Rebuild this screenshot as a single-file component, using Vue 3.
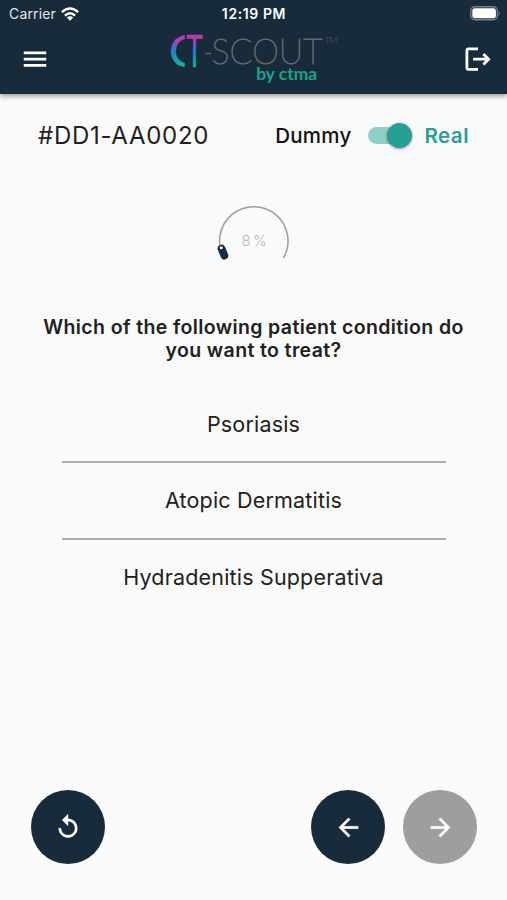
<script setup>
import { ref } from "vue";

const patientId = ref("#DD1-AA0020");
const isReal = ref(true);
const progress = ref(8);
const selected = ref(null);

const conditions = [
  { id: 1, name: "Psoriasis" },
  { id: 2, name: "Atopic Dermatitis" },
  { id: 3, name: "Hydradenitis Supperativa" },
];

const select = (id) => {
  selected.value = id;
};

const restart = () => {
  selected.value = null;
};
</script>

<template>
  <div class="screen">
    <header class="app-bar">
      <div class="status-bar">
        <div class="carrier">
          <span>Carrier</span>
          <svg class="wifi" width="18" height="14" viewBox="0 0 18 14">
            <g fill="none" stroke="#fff" stroke-width="2.5">
              <path d="M0.9 5.2Q9 -2.2 17.1 5.2" />
              <path d="M3.9 8.6Q9 4 14.1 8.6" />
            </g>
            <path d="M9 13.8L5.8 10.5Q9 8 12.2 10.5Z" fill="#fff" />
          </svg>
        </div>
        <span class="clock">12:19 PM</span>
        <svg class="battery" width="31" height="15" viewBox="0 0 31 15">
          <rect x="0.8" y="0.8" width="26.6" height="13" rx="4" fill="none" stroke="#74808a" stroke-width="1.4" />
          <rect x="2.3" y="2.3" width="23.6" height="10" rx="2.4" fill="#fff" />
          <path d="M28.8 5Q31 7.3 28.8 9.6Z" fill="#74808a" />
        </svg>
      </div>

      <div class="toolbar">
        <button class="icon-btn">
          <svg width="30" height="30" viewBox="0 0 24 24" fill="#fff">
            <path d="M3 18.2h18v-2.3H3v2.3zm0-5h18v-2.3H3v2.3zm0-7.3v2.3h18V5.9H3z" />
          </svg>
        </button>

        <svg class="logo" width="170" height="56" viewBox="0 0 170 56">
          <defs>
            <linearGradient id="brand" gradientUnits="userSpaceOnUse" x1="0" y1="4" x2="0" y2="36">
              <stop offset="0" stop-color="#c034a0" />
              <stop offset="0.22" stop-color="#9b49b4" />
              <stop offset="0.5" stop-color="#1b84cf" />
              <stop offset="1" stop-color="#10b5a0" />
            </linearGradient>
            <clipPath id="half">
              <rect x="0" y="0" width="14.7" height="56" />
            </clipPath>
          </defs>
          <g clip-path="url(#half)">
            <text class="mark" x="-1" y="35.8" textLength="31" lengthAdjust="spacingAndGlyphs">C</text>
          </g>
          <text class="mark" x="16.2" y="35.8" textLength="16.5" lengthAdjust="spacingAndGlyphs">T</text>
          <text class="word" x="33.5" y="33.2" textLength="9" lengthAdjust="spacingAndGlyphs">-</text>
          <text class="word" x="41.5" y="33.2" textLength="111" lengthAdjust="spacingAndGlyphs">SCOUT</text>
          <text class="tm" x="155" y="13" textLength="12.5">TM</text>
          <text class="by" x="86.2" y="49" textLength="61" lengthAdjust="spacingAndGlyphs">by ctma</text>
        </svg>

        <button class="icon-btn">
          <svg width="26" height="24" viewBox="0 0 26 24" fill="none" stroke="#fff" stroke-width="2.8">
            <path d="M13 1.9H3.4Q1.9 1.9 1.9 3.4V20.8Q1.9 22.3 3.4 22.3H13" />
            <path d="M8 12.2H23.6M18.4 7L23.6 12.2L18.4 17.4" />
          </svg>
        </button>
      </div>
    </header>

    <main class="content">
      <div class="patient-row">
        <span class="patient-id">{{ patientId }}</span>
        <div class="mode">
          <span class="mode-dummy">Dummy</span>
          <button class="switch" :class="{ on: isReal }" @click="isReal = !isReal">
            <span class="thumb"></span>
          </button>
          <span class="mode-real">Real</span>
        </div>
      </div>

      <!-- progress -->
      <svg class="gauge" width="80" height="66" viewBox="0 0 80 66">
        <path d="M10.2 55A34.2 34.2 0 1 1 69.4 55" fill="none" stroke="#9e9e9e" stroke-width="1.5" />
        <path d="M7.6 45.6L10.4 52.6" stroke="#152c3e" stroke-width="7.8" stroke-linecap="round" />
        <circle cx="7.2" cy="44.8" r="1.5" fill="#fff" />
        <text x="40" y="42.7" text-anchor="middle" textLength="25">{{ progress }} %</text>
      </svg>

      <h1 class="question">
        Which of the following patient condition do<br />you want to treat?
      </h1>

      <ul class="options">
        <li v-for="item in conditions" :key="item.id" @click="select(item.id)">
          {{ item.name }}
        </li>
      </ul>
    </main>

    <footer class="actions">
      <button class="round-btn" @click="restart">
        <svg width="28" height="28" viewBox="0 0 24 24" fill="#fff">
          <path d="M12 5V1L7 6l5 5V7c3.31 0 6 2.69 6 6s-2.69 6-6 6-6-2.69-6-6H4c0 4.42 3.58 8 8 8s8-3.58 8-8-3.58-8-8-8z" stroke="#fff" stroke-width="0.3" />
        </svg>
      </button>
      <div class="nav">
        <button class="round-btn">
          <svg width="29" height="29" viewBox="0 0 24 24" fill="#fff" stroke="#fff" stroke-width="0.3">
            <path d="M20 11H7.83l5.59-5.59L12 4l-8 8 8 8 1.41-1.41L7.83 13H20v-2z" />
          </svg>
        </button>
        <button class="round-btn disabled">
          <svg width="29" height="29" viewBox="0 0 24 24" fill="#fff" stroke="#fff" stroke-width="0.3">
            <path d="M12 4l-1.41 1.41L16.17 11H4v2h12.17l-5.58 5.59L12 20l8-8z" />
          </svg>
        </button>
      </div>
    </footer>
  </div>
</template>

<style>
body {
  margin: 0;
  background: #fafafa;
}
</style>

<style scoped>
.screen {
  width: 507px;
  height: 900px;
  display: flex;
  flex-direction: column;
  background: #fafafa;
  font-family: Inter, "Liberation Sans", sans-serif;
  color: #212121;
  overflow: hidden;
}

button {
  border: none;
  padding: 0;
  background: none;
  cursor: pointer;
}

svg {
  display: block;
}

.app-bar {
  height: 94px;
  background: #172b3b;
  color: #fff;
  box-shadow: 0 2px 5px rgba(0, 0, 0, 0.4);
}

.status-bar {
  height: 27px;
  padding: 0 6px 0 9px;
  display: grid;
  grid-template-columns: 1fr auto 1fr;
  align-items: center;
  font-size: 14px;
}

.carrier {
  display: flex;
  align-items: center;
  gap: 5px;
  color: #e3e6e9;
  letter-spacing: 0.15px;
}

.clock {
  margin-right: 2px;
  font-size: 14px;
  font-weight: 600;
  letter-spacing: 0.6px;
}

.battery {
  justify-self: end;
}

.toolbar {
  height: 64px;
  padding: 0 16px 0 20px;
  display: grid;
  grid-template-columns: 150px 170px 1fr;
  align-items: center;
}

.icon-btn:last-child {
  justify-self: end;
}

.mark {
  font-family: Lato, sans-serif;
  font-size: 43.5px;
  font-weight: 400;
  fill: url(#brand);
  stroke: url(#brand);
  stroke-width: 0.3px;
}

.word {
  font-family: Lato, sans-serif;
  font-size: 36px;
  font-weight: 100;
  fill: #6a6768;
  stroke: #6a6768;
  stroke-width: 1px;
}

.tm {
  font-family: Lato, sans-serif;
  font-size: 9px;
  font-weight: 300;
  fill: #4d5760;
}

.by {
  font-family: Lato, sans-serif;
  font-size: 16.5px;
  font-weight: 700;
  fill: #16a394;
}

.content {
  flex: 1;
  display: flex;
  flex-direction: column;
  align-items: center;
}

.patient-row {
  width: 431px;
  margin-top: 21px;
  height: 40px;
  display: flex;
  align-items: center;
  justify-content: space-between;
}

.patient-id {
  font-size: 24px;
  letter-spacing: 0.7px;
}

.mode {
  display: flex;
  align-items: center;
  font-size: 20.5px;
}

.mode-dummy {
  color: #111;
  font-weight: 500;
  letter-spacing: 0.25px;
}

.mode-real {
  color: #26a095;
  font-weight: 600;
  letter-spacing: 0.5px;
}

.switch {
  width: 44px;
  height: 17px;
  margin: 0 12px 0 17px;
  border-radius: 9px;
  background: #bdbdbd;
  display: flex;
  align-items: center;
}

.switch.on {
  background: #90cfc7;
  justify-content: flex-end;
}

.thumb {
  width: 25px;
  height: 25px;
  flex: none;
  border-radius: 50%;
  background: #26a095;
  box-shadow: 0 1px 3px rgba(0, 0, 0, 0.4);
}

.gauge {
  margin-top: 47.5px;
}

.gauge text {
  font-size: 15px;
  font-weight: 200;
  fill: #9e9e9e;
}

.question {
  margin: 47px 0 0;
  font-size: 19.5px;
  line-height: 23px;
  font-weight: 600;
  letter-spacing: 0.38px;
  text-align: center;
}

.options {
  width: 384px;
  margin: 25px 0 0;
  padding: 0;
  list-style: none;
}

.options li {
  height: 74.5px;
  display: flex;
  align-items: center;
  justify-content: center;
  border-bottom: 2px solid #acacac;
  font-size: 21.5px;
  letter-spacing: 0.18px;
  cursor: pointer;
}

.options li:last-child {
  border-bottom: none;
}

.actions {
  height: 74px;
  padding: 0 30px 36px 31px;
  display: flex;
  justify-content: space-between;
}

.nav {
  display: flex;
  gap: 18px;
}

.round-btn {
  width: 74px;
  height: 74px;
  border-radius: 50%;
  background: #172b3b;
  display: flex;
  align-items: center;
  justify-content: center;
}

.round-btn.disabled {
  background: #9e9e9e;
}
</style>
